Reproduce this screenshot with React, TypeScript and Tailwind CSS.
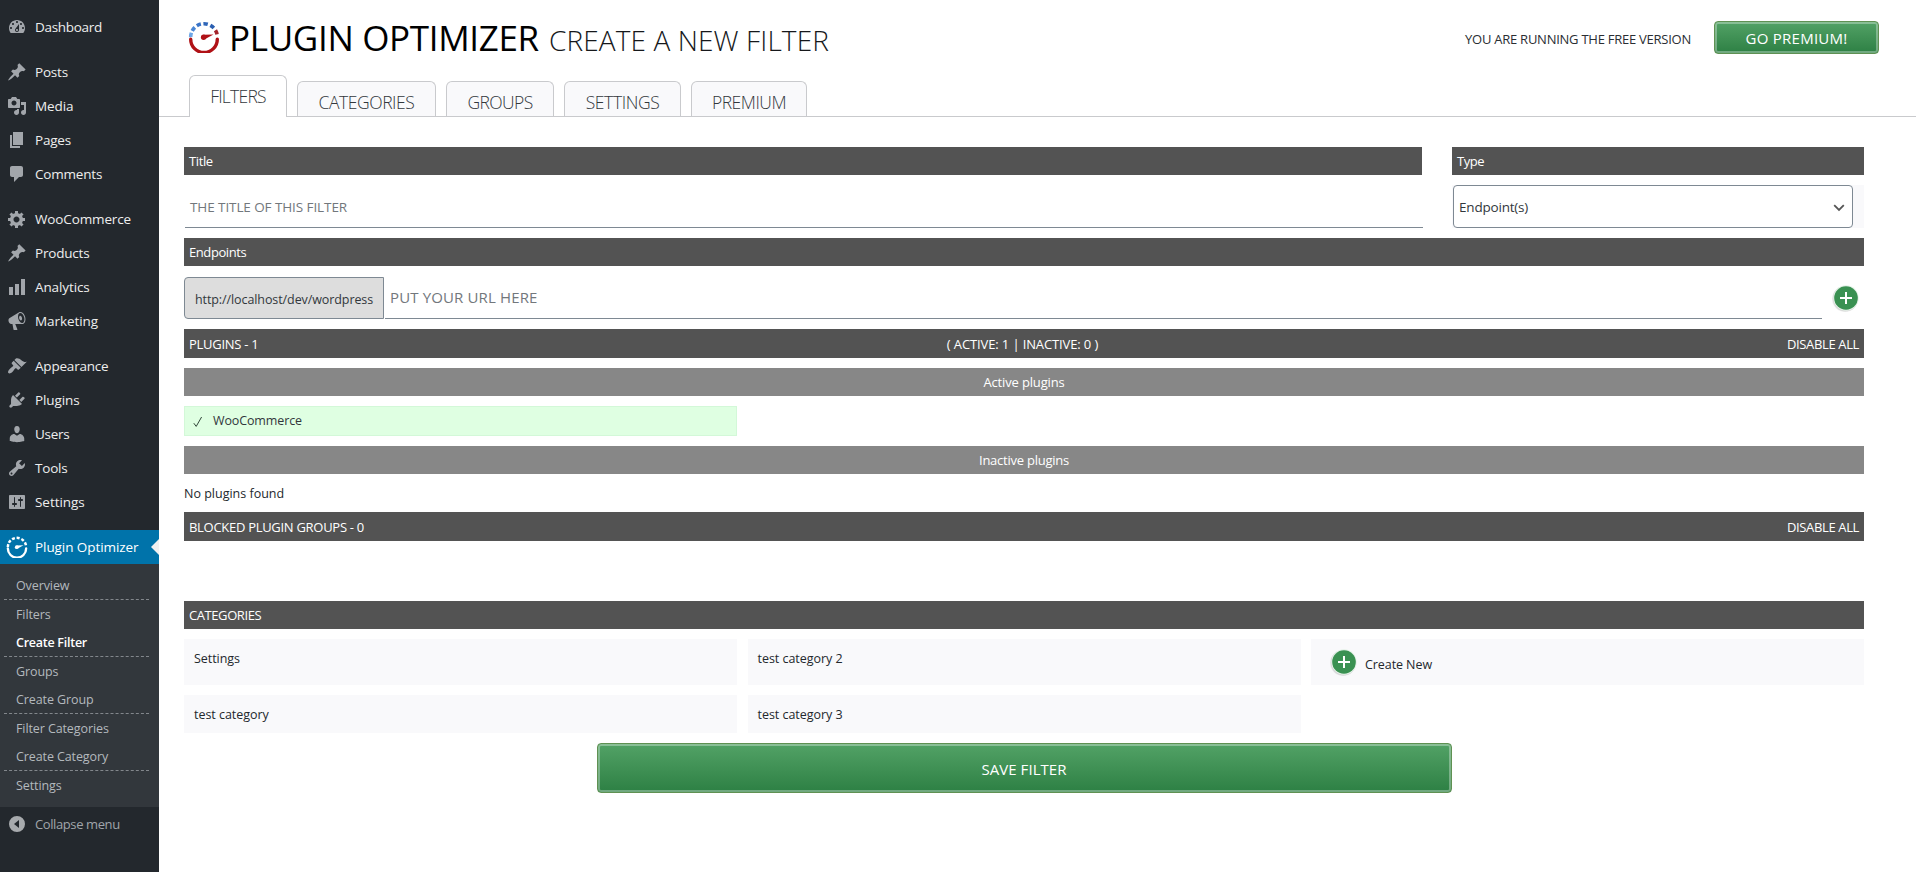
import type { ReactNode } from 'react';

const icons = {
  dashboard:
    'M3.76 16h12.48c1.1-1.37 1.76-3.11 1.76-5 0-4.42-3.58-8-8-8s-8 3.58-8 8c0 1.89.66 3.63 1.76 5zM10 4c.55 0 1 .45 1 1s-.45 1-1 1-1-.45-1-1 .45-1 1-1zM6 6c.55 0 1 .45 1 1s-.45 1-1 1-1-.45-1-1 .45-1 1-1zm8 0c.55 0 1 .45 1 1s-.45 1-1 1-1-.45-1-1 .45-1 1-1zm-5.37 5.55L12 7v6c0 1.1-.9 2-2 2s-2-.9-2-2c0-.57.24-1.08.63-1.45zM4 10c.55 0 1 .45 1 1s-.45 1-1 1-1-.45-1-1 .45-1 1-1zm12 0c.55 0 1 .45 1 1s-.45 1-1 1-1-.45-1-1 .45-1 1-1zm-5 3c0-.55-.45-1-1-1s-1 .45-1 1 .45 1 1 1 1-.45 1-1z',
  pin: 'M10.44 3.02l1.82-1.82 6.36 6.35-1.83 1.82c-1.05-.68-2.48-.57-3.41.36l-.75.75c-.92.93-1.04 2.35-.35 3.41l-1.83 1.82-2.41-2.41-2.8 2.79c-.42.42-3.38 2.71-3.8 2.29s1.86-3.39 2.28-3.81l2.79-2.79L4.1 9.36l1.83-1.82c1.05.69 2.48.57 3.4-.36l.75-.75c.93-.92 1.05-2.35.36-3.41z',
  media:
    'M13 11V4c0-.55-.45-1-1-1h-1.67L9 1H5L3.67 3H2c-.55 0-1 .45-1 1v7c0 .55.45 1 1 1h10c.55 0 1-.45 1-1zM7 4.5c1.38 0 2.5 1.12 2.5 2.5S8.38 9.5 7 9.5 4.5 8.38 4.5 7 5.62 4.5 7 4.5zM14 6h5v10.5c0 1.38-1.12 2.5-2.5 2.5S14 17.88 14 16.5s1.12-2.5 2.5-2.5c.17 0 .34.02.5.05V9h-3V6zm-4 8.05V13h2v3.5c0 1.38-1.12 2.5-2.5 2.5S7 17.88 7 16.5 8.12 14 9.5 14c.17 0 .34.02.5.05z',
  pages: 'M6 15V2h10v13H6zm-1 1h8v2H3V5h2v11z',
  comments:
    'M5 2h9c1.1 0 2 .9 2 2v7c0 1.1-.9 2-2 2h-2l-5 5v-5H5c-1.1 0-2-.9-2-2V4c0-1.1.9-2 2-2z',
  gear: 'M18 12h-2.18c-.17.7-.44 1.35-.81 1.93l1.54 1.54-2.1 2.1-1.54-1.54c-.58.36-1.23.63-1.91.79V19H8v-2.18c-.68-.16-1.33-.43-1.91-.79l-1.54 1.54-2.12-2.12 1.54-1.54c-.36-.58-.63-1.23-.79-1.91H1V9.03h2.17c.16-.7.44-1.35.8-1.94L2.43 5.55l2.1-2.1 1.54 1.54c.58-.37 1.24-.64 1.93-.81V2h3v2.18c.68.16 1.33.43 1.91.79l1.54-1.54 2.12 2.12-1.54 1.54c.36.59.64 1.24.8 1.94H18V12zm-8.5 1.5c1.66 0 3-1.34 3-3s-1.34-3-3-3-3 1.34-3 3 1.34 3 3 3z',
  chart: 'M18 18V2h-4v16h4zm-6 0V7H8v11h4zm-6 0v-8H2v8h4z',
  megaphone:
    'M18.15 5.94c.46 1.62.38 3.22-.02 4.48-.42 1.28-1.26 2.18-2.3 2.48-.16.06-.26.06-.4.06-.06.02-.12.02-.18.02-.06.02-.14.02-.22.02h-6.8l2.22 5.5c.02.14-.06.26-.14.34-.08.1-.24.16-.34.16H6.95c-.1 0-.26-.06-.34-.16-.08-.08-.16-.2-.14-.34l-1-5.5H4.25l-.02-.02c-.5.06-1.08-.18-1.54-.62s-.88-1.08-1.06-1.88c-.24-.8-.2-1.56-.02-2.2.18-.62.58-1.08 1.06-1.3l.02-.02 9-5.4c.1-.06.18-.1.24-.16.06-.04.14-.08.24-.12.16-.08.28-.12.5-.18 1.04-.3 2.24.1 3.22.98s1.84 2.24 2.26 3.86zm-2.58 5.98h-.02c.4-.1.74-.34 1.04-.7.58-.7.86-1.76.86-3.04 0-.64-.1-1.3-.28-1.98-.34-1.36-1.02-2.5-1.78-3.24s-1.68-1.1-2.46-.88c-.82.22-1.4.96-1.7 2-.32 1.04-.28 2.36.06 3.72.38 1.36 1 2.5 1.8 3.24.78.74 1.62 1.1 2.48.88zm-2.54-7.08c.22-.04.42-.02.62.04.38.16.76.48 1.02 1s.42 1.2.42 1.78c0 .3-.04.56-.12.8-.18.48-.44.84-.86.94-.34.1-.8-.06-1.14-.4s-.64-.86-.78-1.5c-.18-.62-.12-1.24.02-1.72s.48-.84.82-.94z',
  brush:
    'M14.48 11.06L7.41 3.99l1.5-1.5c.5-.56 2.3-.47 3.51.32 1.21.8 1.43 1.28 2.91 2.1 1.18.64 2.45 1.26 4.45.85zm-.71.71L6.7 4.7 4.93 6.47c-.39.39-.39 1.02 0 1.41l1.06 1.06c.39.39.39 1.03 0 1.42-.6.6-1.43 1.11-2.21 1.69-.35.26-.7.53-1.01.84C1.43 14.23.4 16.08 1.4 17.07c.99 1 2.84-.03 4.18-1.36.31-.31.58-.66.85-1.02.57-.78 1.08-1.61 1.69-2.21.39-.39 1.02-.39 1.41 0l1.06 1.06c.39.39 1.02.39 1.41 0z',
  plug: 'M13.11 4.36L9.87 7.6 8 5.73l3.24-3.24c.35-.34 1.05-.2 1.56.32.52.51.66 1.21.31 1.55zm-8 1.77l.91-1.12 9.01 9.01-1.19.84c-.71.71-2.63 1.16-3.82 1.16H6.14L4.9 17.26c-.59.59-1.54.59-2.12 0-.59-.58-.59-1.53 0-2.12l1.24-1.24v-3.88c0-1.13.4-3.19 1.09-3.89zm7.26 3.97l3.24-3.24c.34-.35 1.04-.21 1.55.31.52.51.66 1.21.31 1.55l-3.24 3.25z',
  user: 'M10 9.25c-2.27 0-2.73-3.44-2.73-3.44C7 4.02 7.82 2 9.97 2c2.16 0 2.98 2.02 2.71 3.81 0 0-.41 3.44-2.68 3.44zm0 2.57L12.72 10c2.39 0 4.52 2.33 4.52 4.53v2.49s-3.65 1.13-7.24 1.13c-3.65 0-7.24-1.13-7.24-1.13v-2.49c0-2.25 1.94-4.48 4.47-4.48z',
  wrench:
    'M16.68 9.77c-1.34 1.34-3.3 1.67-4.95.99l-5.41 6.52c-.99.99-2.59.99-3.58 0s-.99-2.59 0-3.57l6.52-5.42c-.68-1.65-.35-3.61.99-4.95 1.28-1.28 3.12-1.62 4.72-1.06l-2.89 2.89 2.82 2.82 2.86-2.87c.53 1.58.18 3.39-1.08 4.65zM3.81 16.21c.4.39 1.04.39 1.43 0 .4-.4.4-1.04 0-1.43-.39-.4-1.03-.4-1.43 0-.39.39-.39 1.03 0 1.43z',
  sliders:
    'M18 16V4c0-.55-.45-1-1-1H3c-.55 0-1 .45-1 1v12c0 .55.45 1 1 1h14c.55 0 1-.45 1-1zM8 11h1c.55 0 1 .45 1 1s-.45 1-1 1H8v1.5c0 .28-.22.5-.5.5s-.5-.22-.5-.5V13H6c-.55 0-1-.45-1-1s.45-1 1-1h1V5.5c0-.28.22-.5.5-.5s.5.22.5.5V11zm5-2h-1c-.55 0-1-.45-1-1s.45-1 1-1h1V5.5c0-.28.22-.5.5-.5s.5.22.5.5V7h1c.55 0 1 .45 1 1s-.45 1-1 1h-1v5.5c0 .28-.22.5-.5.5s-.5-.22-.5-.5V9z',
};

type IconName = keyof typeof icons;

const menuGroups: { label: string; icon: IconName; tracking: string }[][] = [
  [{ label: 'Dashboard', icon: 'dashboard', tracking: 'tracking-[-0.3px]' }],
  [
    { label: 'Posts', icon: 'pin', tracking: 'tracking-[-0.2px]' },
    { label: 'Media', icon: 'media', tracking: 'tracking-[-0.1px]' },
    { label: 'Pages', icon: 'pages', tracking: 'tracking-[-0.2px]' },
    { label: 'Comments', icon: 'comments', tracking: 'tracking-[-0.2px]' },
  ],
  [
    { label: 'WooCommerce', icon: 'gear', tracking: 'tracking-[-0.13px]' },
    { label: 'Products', icon: 'pin', tracking: 'tracking-[-0.2px]' },
    { label: 'Analytics', icon: 'chart', tracking: 'tracking-[-0.1px]' },
    { label: 'Marketing', icon: 'megaphone', tracking: 'tracking-[-0.07px]' },
  ],
  [
    { label: 'Appearance', icon: 'brush', tracking: 'tracking-[-0.2px]' },
    { label: 'Plugins', icon: 'plug', tracking: 'tracking-[-0.1px]' },
    { label: 'Users', icon: 'user', tracking: 'tracking-[-0.25px]' },
    { label: 'Tools', icon: 'wrench', tracking: 'tracking-[-0.2px]' },
    { label: 'Settings', icon: 'sliders', tracking: 'tracking-[-0.05px]' },
  ],
];

const submenu: { label: string; active?: boolean; divider?: boolean }[] = [
  { label: 'Overview', divider: true },
  { label: 'Filters' },
  { label: 'Create Filter', active: true, divider: true },
  { label: 'Groups' },
  { label: 'Create Group', divider: true },
  { label: 'Filter Categories' },
  { label: 'Create Category', divider: true },
  { label: 'Settings' },
];

function MenuIcon({ name }: { name: IconName }) {
  return (
    <svg viewBox="0 0 20 20" className="ml-[7px] h-5 w-5 shrink-0 fill-[#a2a6ab]">
      <path fillRule="evenodd" d={icons[name]} />
    </svg>
  );
}

function Gauge({ className, mono }: { className: string; mono?: boolean }) {
  const red = mono ? '#fff' : '#b01116';
  const dots = mono
    ? ['#fff', '#fff', '#fff', '#fff', '#fff', '#fff']
    : ['#6ea6e6', '#4a86d4', '#3a74c8', '#2f66b8', '#2a5eb0', '#a3232b'];
  const angles = [171, 143, 113, 83, 52, 21];
  return (
    <svg viewBox="0 0 32 32" className={className} fill="none">
      {angles.map((a, i) => {
        const point = (deg: number) => {
          const r = (deg * Math.PI) / 180;
          return `${(16 + 13.3 * Math.cos(r)).toFixed(2)} ${(16 - 13.3 * Math.sin(r)).toFixed(2)}`;
        };
        return (
          <path
            key={a}
            d={`M${point(a + 9.5)}A13.3 13.3 0 0 1 ${point(a - 9.5)}`}
            stroke={dots[i]}
            strokeWidth="3.6"
          />
        );
      })}
      <path d="M2.7 18.2A13.3 13.3 0 0 0 29.3 18.2" stroke={red} strokeWidth="3.4" strokeLinecap="round" />
      <path d="M15.4 13.8L25.5 13.4L17.2 18Z" fill={red} />
      <circle cx="15.6" cy="16.2" r="2.7" fill={red} />
    </svg>
  );
}

function Sidebar() {
  return (
    <aside className="flex w-[159px] shrink-0 flex-col bg-[#23282d] pt-[10px] text-[13.5px] text-[#eee]">
      {menuGroups.map((group, i) => (
        <ul key={i} className="mb-[11px]">
          {group.map(({ label, icon, tracking }) => (
            <li key={label} className="flex h-[34px] items-center gap-2">
              <MenuIcon name={icon} />
              <span className={tracking}>{label}</span>
            </li>
          ))}
        </ul>
      ))}
      <div className="relative flex h-[34px] items-center bg-[#0073aa] text-white">
        <Gauge mono className="ml-[6px] h-[22px] w-[22px]" />
        <span className="ml-[7px] whitespace-nowrap tracking-[-0.07px]">Plugin Optimizer</span>
        <span className="absolute top-[9px] right-0 border-y-8 border-r-8 border-y-transparent border-r-[#f1f1f1]" />
      </div>
      <ul className="bg-[#32373c] pt-[7px] pb-2 text-[12.5px] tracking-[-0.1px] text-[#b4b9be]">
        {submenu.map(({ label, active, divider }) => (
          <li
            key={label}
            className={
              divider ? 'mr-[10px] ml-1 border-b border-dashed border-[#82878c] pl-3' : 'mr-[10px] ml-1 pl-3'
            }
          >
            <span
              className={
                active
                  ? 'flex h-7 items-center pt-[2px] font-semibold tracking-[-0.26px] text-white'
                  : 'flex h-7 items-center pt-[2px]'
              }
            >
              {label}
            </span>
          </li>
        ))}
      </ul>
      <div className="flex h-[34px] items-center gap-2 text-[13px] tracking-[-0.4px] text-[#a0a5aa]">
        <svg viewBox="0 0 20 20" className="ml-[7px] h-5 w-5">
          <path
            fill="#a7aaad"
            fillRule="evenodd"
            d="M10 2a8 8 0 1 0 0 16a8 8 0 0 0 0-16zM12 6v8l-5-4z"
          />
        </svg>
        <span className="pt-px">Collapse menu</span>
      </div>
    </aside>
  );
}

const tabs = [
  { label: 'CATEGORIES', size: 'w-[139px] tracking-[-0.45px]' },
  { label: 'GROUPS', size: 'w-[108px] tracking-[-0.6px]' },
  { label: 'SETTINGS', size: 'w-[117px] tracking-[-0.4px]' },
  { label: 'PREMIUM', size: 'w-[116px] tracking-[-0.5px]' },
];

const greenButton =
  'flex items-center justify-center rounded-[4px] border border-[#5f9152] bg-linear-to-b from-[#52a266] to-[#2d8044] text-white shadow-[inset_0_0_0_2px_rgba(255,255,255,0.32)]';

function Header() {
  return (
    <header className="flex h-[117px] flex-col">
      <div className="flex h-[75px] pl-[29px]">
        <Gauge className="mt-[21px] h-8 w-8" />
        <h1 className="ml-[9px] pt-[14px] text-[35px] leading-[48px] tracking-[-0.33px] whitespace-nowrap text-black">
          PLUGIN OPTIMIZER
        </h1>
        <span className="ml-[10px] pt-[19px] text-[28px] leading-[42px] font-light tracking-[0.11px] whitespace-nowrap text-[#16181b]">
          CREATE A NEW FILTER
        </span>
        <span className="mt-[29px] ml-auto text-[13px] leading-5 tracking-[-0.25px] whitespace-nowrap text-[#2a2e33]">
          YOU ARE RUNNING THE FREE VERSION
        </span>
        <button className={`${greenButton} mt-[21px] mr-[37px] ml-[23px] h-[33px] w-[165px] pt-px text-[15px] tracking-[0.26px]`}>
          GO PREMIUM!
        </button>
      </div>
      <nav className="flex h-[42px] items-end pl-[30px] text-[17.5px] font-light text-[#32373c]">
        <span className="-ml-[30px] h-px w-[30px] bg-[#c9cacd]" />
        <div className="flex h-[42px] w-[98px] justify-center rounded-t-[6px] border border-b-0 border-[#c9cacd] bg-white pt-[8px] leading-6 tracking-[-0.75px]">
          FILTERS
        </div>
        <div className="flex h-[36px] flex-1 items-end gap-[10px] border-b border-[#c9cacd] pl-[10px]">
          {tabs.map(({ label, size }) => (
            <div
              key={label}
              className={`${size} flex h-[35px] justify-center rounded-t-[6px] border border-b-0 border-[#c9cacd] bg-[#f9f9fb] pt-[8px] leading-6`}
            >
              {label}
            </div>
          ))}
        </div>
      </nav>
    </header>
  );
}

function Bar({ children, className }: { children: ReactNode; className: string }) {
  return <div className={`flex items-center px-[5px] pt-[2px] text-[13px] text-white ${className}`}>{children}</div>;
}

function PlusButton() {
  return (
    <svg viewBox="0 0 30 30" className="h-[30px] w-[30px] shrink-0">
      <circle cx="14" cy="16" r="13" fill="#000" opacity="0.06" />
      <circle cx="14.5" cy="15.6" r="12.8" fill="#000" opacity="0.1" />
      <circle cx="15" cy="15" r="12.7" fill="#e6f3e9" />
      <circle cx="15" cy="15" r="11.8" fill="#3a9152" />
      <path d="M9 15h12M15 9v12" stroke="#fff" strokeWidth="2" />
    </svg>
  );
}

function Category({ label, className }: { label: string; className: string }) {
  return (
    <div className={`bg-[#f9f9fb] pl-[10px] text-[12.5px] leading-[18px] tracking-[-0.04px] text-[#23282d] ${className}`}>
      {label}
    </div>
  );
}

export default function App() {
  return (
    <div className="flex h-[872px] w-[1916px] overflow-hidden bg-white font-['Open_Sans','Noto_Sans',sans-serif]">
      <Sidebar />
      <div className="flex flex-1 flex-col">
        <Header />
        <main className="mt-[30px] ml-[25px] flex w-[1680px] flex-col text-[#23282d]">
          <div className="flex gap-[30px]">
            <div className="w-[1238px]">
              <Bar className="h-7 bg-[#535353] font-medium tracking-[-0.4px]">Title</Bar>
              <div className="mt-[10px] ml-px flex h-[43px] w-[1238px] items-center border-b border-[#7e8993] pt-[2px] pl-[5px] text-[13.5px] tracking-[-0.09px] text-[#72777c]">
                THE TITLE OF THIS FILTER
              </div>
            </div>
            <div className="w-[412px]">
              <Bar className="h-7 bg-[#535353] font-medium tracking-[-0.5px]">Type</Bar>
              <div className="mt-[10px] bg-[#f9f9fb] pr-[11px] pl-px">
                <div className="flex h-[43px] items-center justify-between rounded-[4px] border border-[#7e8993] bg-white pt-[2px] pr-[7px] pl-[5px] text-[13.5px] tracking-[-0.2px] text-[#32373c]">
                  Endpoint(s)
                  <svg viewBox="0 0 12 8" className="h-2 w-3" fill="none">
                    <path d="M1.2 1.2L6 6L10.8 1.2" stroke="#555" strokeWidth="1.8" />
                  </svg>
                </div>
              </div>
            </div>
          </div>

          <Bar className="mt-[10px] h-7 bg-[#535353] tracking-[-0.42px]">Endpoints</Bar>
          <div className="mt-[11px] flex h-[42px]">
            <div className="flex w-[200px] items-center rounded-l-[4px] border border-[#7e8993] bg-[#ddd] pt-[4px] pl-[10px] text-[12.5px] tracking-[-0.09px] text-[#32373c]">
              http://localhost/dev/wordpress
            </div>
            <div className="ml-px flex w-[1437px] items-center border-b border-[#7e8993] pl-[5px] text-[15px] tracking-[0.14px] text-[#72777c]">
              PUT YOUR URL HERE
            </div>
            <div className="flex pt-[6px] pl-[9px]">
              <PlusButton />
            </div>
          </div>

          <Bar className="mt-[10px] h-[29px] justify-between bg-[#535353]">
            <span className="flex-1 tracking-[-0.27px]">PLUGINS - 1</span>
            <span className="mr-[3px] tracking-[-0.12px]">( ACTIVE: 1 | INACTIVE: 0 )</span>
            <span className="flex-1 text-right tracking-[-0.36px]">DISABLE ALL</span>
          </Bar>
          <Bar className="mt-[10px] h-7 justify-center bg-[#878787] tracking-[-0.16px]">Active plugins</Bar>
          <div className="mt-[10px] flex h-[30px] w-[553px] items-center border border-[#d3f8d8] bg-[#dfffe2] pt-px pl-[8px] text-[12.5px] tracking-[-0.12px] text-[#32373c]">
            <svg viewBox="0 0 10 12" className="mr-[10px] h-3 w-[10px]" fill="none">
              <path d="M0.8 7.2L3.2 10.4L8.6 1" stroke="#32473a" strokeWidth="1" />
            </svg>
            WooCommerce
          </div>
          <Bar className="mt-[10px] h-7 justify-center bg-[#878787] tracking-[-0.24px]">Inactive plugins</Bar>
          <p className="mt-[10px] h-[18px] text-[12.5px] leading-[20px]">No plugins found</p>

          <Bar className="mt-[10px] h-[29px] justify-between bg-[#535353]">
            <span className="tracking-[-0.29px]">BLOCKED PLUGIN GROUPS - 0</span>
            <span className="tracking-[-0.36px]">DISABLE ALL</span>
          </Bar>
          <Bar className="mt-[60px] h-7 bg-[#535353] tracking-[-0.42px]">CATEGORIES</Bar>

          <div className="mt-[10px] grid grid-cols-[553px_553px_553px] gap-x-[10.5px] gap-y-[10px]">
            <Category label="Settings" className="h-[46px] pt-[11px]" />
            <Category label="test category 2" className="h-[46px] pt-[11px]" />
            <div className="flex h-[46px] bg-[#f9f9fb] pt-[8px] pl-[18px] text-[12.5px] tracking-[-0.08px]">
              <PlusButton />
              <span className="mt-[9px] ml-[6px] leading-[18px]">Create New</span>
            </div>
            <Category label="test category" className="h-[38px] pt-[11px]" />
            <Category label="test category 3" className="h-[38px] pt-[11px]" />
          </div>

          <button className={`${greenButton} mt-[10px] h-[50px] w-[855px] self-center pt-[3px] text-[15px] tracking-[0.05px]`}>
            SAVE FILTER
          </button>
        </main>
      </div>
    </div>
  );
}
